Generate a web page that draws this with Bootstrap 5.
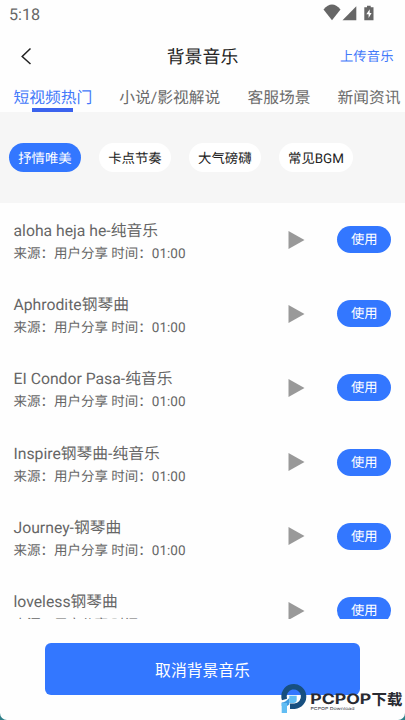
<!DOCTYPE html>
<html lang="zh-CN">
<head>
<meta charset="utf-8">
<meta name="viewport" content="width=device-width, initial-scale=1">
<title>背景音乐</title>
<link href="https://cdn.jsdelivr.net/npm/bootstrap@5.3.0/dist/css/bootstrap.min.css" rel="stylesheet">
<style>
html{background:#2d7f88}
body{font-family:Roboto,"Noto Sans CJK SC",sans-serif;color:#666;background:#2d7f88;overflow:hidden;text-rendering:geometricPrecision}
.screen{width:405px;height:720px;background:#fefefe;border-radius:0 0 7px 7px}
.statusbar{height:28px;padding:0 30px 0 9px;font-size:16.2px;line-height:29px;color:#666}
.topbar{height:56px;padding:0 11px 0 20px}
.side{width:54px}
.back{margin-right:-9px}
.page-title{font-size:17.9px;line-height:26px;color:#222;padding-top:4px}
.upload{font-size:13.4px;line-height:20px;color:#4379fa;padding-top:4px}
.tabs-row{height:28px;padding-left:13.5px;gap:27.1px}
.tab-link{font-size:15.75px;line-height:28px;height:28px;color:#6b6b6b}
.tab-link.active{color:#4379fa}
.tab-link.active::after{content:"";display:block;width:41px;height:4px;margin:-4px auto 0;background:#3b63ee}
.chips{height:90.5px;background:#f6f6f6;padding:0 9px;gap:18px}
.chip{height:29.5px;line-height:33px;font-size:13.4px;padding:0 9.2px;background:#fff;color:#222}
.chip.active{background:#3377ff;color:#fff}
.songs{height:416px}
.song{height:74.2px;flex:none;padding:0 13.7px 0 13.5px}
.song-title{font-size:15.75px;line-height:23px;margin-top:6px}
.song-sub{font-size:13.5px;line-height:24px}
.use-btn{width:54px;height:27px;line-height:30px;font-size:13.3px;background:#3377ff;color:#fff;margin-left:32px}
.cancel-btn{width:315px;height:52px;margin:24.5px 0 0 45px;border-radius:6px;background:#3377ff;color:#fff;font-size:15.8px;line-height:56px}
.watermark{left:279px;top:681px}
</style>
</head>
<body>
<main class="screen position-relative d-flex flex-column overflow-hidden">
  <div class="statusbar d-flex justify-content-between">
    <span>5:18</span>
    <svg width="53" height="28" viewBox="322 0 53 28" fill="#666"><path d="M323.5 9.5Q332-.5 340.5 9.5L332 20.3Z"/><path d="M342.5 20.3 356.300 6.200V20.300Z"/><path d="M364.300 7.200H367V5.700H370.700V7.200H373.500V20.300H364.300Z"/><path d="M369.700 9.300 366.300 14.300H368.600V18L371.600 12.900H369.700Z" fill="#fff"/></svg>
  </div>
  <header class="topbar d-flex align-items-center justify-content-between text-nowrap">
    <div class="side back d-flex"><svg width="14" height="20" viewBox="0 0 14 20"><path d="M10.500 2.500 2.200 10.500 10.500 18" fill="none" stroke="#222" stroke-width="1.500"/></svg></div>
    <div class="page-title">背景音乐</div>
    <div class="side upload">上传音乐</div>
  </header>
  <nav class="tabs-row d-flex text-nowrap">
    <div class="tab-link active">短视频热门</div>
    <div class="tab-link">小说/影视解说</div>
    <div class="tab-link">客服场景</div>
    <div class="tab-link">新闻资讯</div>
  </nav>
  <div class="chips d-flex align-items-center text-nowrap">
    <div class="chip active rounded-pill">抒情唯美</div>
    <div class="chip rounded-pill">卡点节奏</div>
    <div class="chip rounded-pill">大气磅礴</div>
    <div class="chip rounded-pill">常见BGM</div>
  </div>
  <div class="songs d-flex flex-column overflow-hidden flex-shrink-0">
    <div class="song d-flex align-items-center"><div class="flex-grow-1"><div class="song-title">aloha heja he-纯音乐</div><div class="song-sub">来源：用户分享 时间：01:00</div></div><svg width="17" height="18" viewBox="0 0 17 18"><path d="M.5 0 16.500 9 .5 18Z" fill="#999"/></svg><div class="use-btn rounded-pill text-center">使用</div></div>
    <div class="song d-flex align-items-center"><div class="flex-grow-1"><div class="song-title">Aphrodite钢琴曲</div><div class="song-sub">来源：用户分享 时间：01:00</div></div><svg width="17" height="18" viewBox="0 0 17 18"><path d="M.5 0 16.500 9 .5 18Z" fill="#999"/></svg><div class="use-btn rounded-pill text-center">使用</div></div>
    <div class="song d-flex align-items-center"><div class="flex-grow-1"><div class="song-title">EI Condor Pasa-纯音乐</div><div class="song-sub">来源：用户分享 时间：01:00</div></div><svg width="17" height="18" viewBox="0 0 17 18"><path d="M.5 0 16.500 9 .5 18Z" fill="#999"/></svg><div class="use-btn rounded-pill text-center">使用</div></div>
    <div class="song d-flex align-items-center"><div class="flex-grow-1"><div class="song-title">Inspire钢琴曲-纯音乐</div><div class="song-sub">来源：用户分享 时间：01:00</div></div><svg width="17" height="18" viewBox="0 0 17 18"><path d="M.5 0 16.500 9 .5 18Z" fill="#999"/></svg><div class="use-btn rounded-pill text-center">使用</div></div>
    <div class="song d-flex align-items-center"><div class="flex-grow-1"><div class="song-title">Journey-钢琴曲</div><div class="song-sub">来源：用户分享 时间：01:00</div></div><svg width="17" height="18" viewBox="0 0 17 18"><path d="M.5 0 16.500 9 .5 18Z" fill="#999"/></svg><div class="use-btn rounded-pill text-center">使用</div></div>
    <div class="song d-flex align-items-center"><div class="flex-grow-1"><div class="song-title">loveless钢琴曲</div><div class="song-sub">来源：用户分享 时间：01:00</div></div><svg width="17" height="18" viewBox="0 0 17 18"><path d="M.5 0 16.500 9 .5 18Z" fill="#999"/></svg><div class="use-btn rounded-pill text-center">使用</div></div>
  </div>
  <button class="cancel-btn btn p-0 border-0">取消背景音乐</button>
  <svg class="watermark position-absolute" width="126" height="34" viewBox="279 681 126 34">
    <path d="M284.500 699.500A9.800 9.800 0 1 1 294.500 706.300H290" fill="none" stroke="#174f80" stroke-width="5.400"/>
    <path d="M289.300 695.700H296.700V700Q296.700 703 293.500 703H289.300Z" fill="#61bdf3"/>
    <path d="M289.300 698V704.500L287 706H281.700V702.500Q285 702.500 289.300 698Z" fill="#3f9be0"/>
    <path d="M281.700 703H287V713H281.700Z" fill="#61bdf3"/>
    <g fill="#292a31" font-family="Inter,sans-serif">
      <text x="310.200" y="703.600" font-size="14.300" font-weight="700" textLength="61" lengthAdjust="spacingAndGlyphs">PCPOP</text>
      <text x="371.500" y="704.700" font-family="'Noto Sans CJK SC',sans-serif" font-size="15.400" font-weight="700">下载</text>
      <text x="310.500" y="709.500" font-size="4" textLength="44" lengthAdjust="spacingAndGlyphs">PCPOP Download</text>
    </g>
  </svg>
</main>
<script src="https://cdn.jsdelivr.net/npm/bootstrap@5.3.0/dist/js/bootstrap.bundle.min.js"></script>
</body>
</html>
